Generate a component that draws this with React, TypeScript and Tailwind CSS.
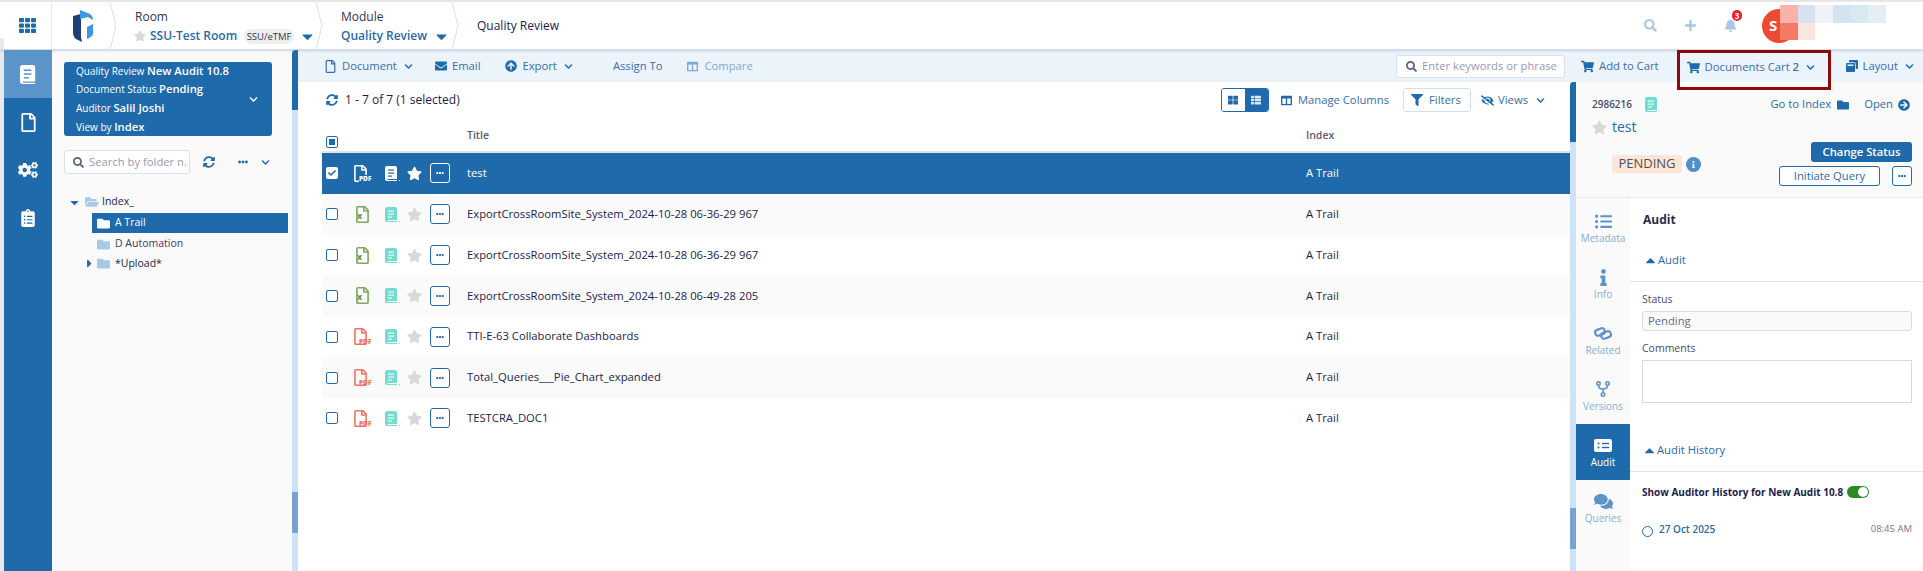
import {
  FaArrowCircleRight,
  FaArrowCircleUp,
  FaBell,
  FaCaretDown,
  FaCaretRight,
  FaCaretUp,
  FaCheck,
  FaChevronDown,
  FaClipboardList,
  FaCogs,
  FaColumns,
  FaComments,
  FaEllipsisH,
  FaEnvelope,
  FaEyeSlash,
  FaFilter,
  FaFolder,
  FaFolderOpen,
  FaInfo,
  FaListUl,
  FaPlus,
  FaRegFile,
  FaSearch,
  FaShoppingCart,
  FaStar,
  FaSyncAlt,
  FaTh,
  FaThLarge,
  FaThList,
  FaWindowRestore,
} from "react-icons/fa";

const ROWS = [
  { title: "test", type: "pdf" },
  { title: "ExportCrossRoomSite_System_2024-10-28 06-36-29 967", type: "xls" },
  { title: "ExportCrossRoomSite_System_2024-10-28 06-36-29 967", type: "xls" },
  { title: "ExportCrossRoomSite_System_2024-10-28 06-49-28 205", type: "xls" },
  { title: "TTI-E-63 Collaborate Dashboards", type: "pdf" },
  { title: "Total_Queries___Pie_Chart_expanded", type: "pdf" },
  { title: "TESTCRA_DOC1", type: "pdf" },
];

function Sep() {
  return (
    <svg width="6" height="48" viewBox="0 0 6 48" className="shrink-0">
      <polyline points="0,0 6,24 0,48" fill="none" stroke="#d5e2ef" strokeWidth="1" />
    </svg>
  );
}

function BookIcon({ size = 15, color = "#fff", line = "#1f6aab" }: { size?: number; color?: string; line?: string }) {
  return (
    <svg width={size * 0.8} height={size} viewBox="0 0 12 15">
      <path d="M2 0h8a2 2 0 0 1 2 2v11H2.5a.9.9 0 0 0 0 1H12v1H2a2 2 0 0 1-2-2V2a2 2 0 0 1 2-2z" fill={color} />
      <rect x="3" y="3.5" width="6" height="1.2" fill={line} />
      <rect x="3" y="6.5" width="6" height="1.2" fill={line} />
      <rect x="3" y="9.5" width="4" height="1.2" fill={line} />
    </svg>
  );
}

function Logo() {
  return (
    <svg width="21" height="32" viewBox="0 0 21 32">
      <path d="M0 6 L8 4 V27 L9 32 L3 29 Q0 27 0 22 Z" fill="#1d3f75" />
      <path d="M7 0 L17 4 Q20 6 20 10 L15 7 L7 9 Z" fill="#3f97e0" />
      <path d="M20 14 V24 Q19 27 14 29 V17 Z" fill="#3f97e0" />
    </svg>
  );
}

function RelatedIcon() {
  return (
    <svg width="18" height="15" viewBox="0 0 18 15" fill="none" stroke="currentColor" strokeWidth="2.2">
      <rect x="1" y="3" width="10" height="6" rx="3" transform="rotate(-20 6 6)" />
      <rect x="7" y="6" width="10" height="6" rx="3" transform="rotate(-20 12 9)" />
    </svg>
  );
}

function VersionsIcon() {
  return (
    <svg width="14" height="16" viewBox="0 0 14 16" fill="none" stroke="currentColor" strokeWidth="1.6">
      <circle cx="2.5" cy="2.5" r="1.7" />
      <circle cx="11.5" cy="2.5" r="1.7" />
      <circle cx="7" cy="13.5" r="1.7" />
      <path d="M2.5 4.5 Q2.5 8 7 8 Q11.5 8 11.5 4.5 M7 8 V11.5" />
    </svg>
  );
}

function FileIcon({ type, selected }: { type: string; selected: boolean }) {
  if (type === "xls") {
    return (
      <span className="relative ml-[2px] flex h-[17px] w-[18px]">
        <FaRegFile className="text-[17px] text-[#7fa860]" />
        <span className="absolute left-[3px] top-[5px] text-[9px] font-bold leading-[10px] text-[#5d8f3c]">x</span>
      </span>
    );
  }
  const color = selected ? "text-white" : "text-[#f2715f]";
  return (
    <span className="relative flex h-[17px] w-[18px]">
      <FaRegFile className={`text-[17px] ${color}`} />
      <span className={`absolute left-[7px] top-[10px] text-[6.5px] font-extrabold leading-[7px] ${color} ${selected ? "bg-[#1f6aab]" : ""}`}>PDF</span>
    </span>
  );
}

function DotsButton({ selected = false }: { selected?: boolean }) {
  return (
    <button
      className={`flex h-[20px] w-[20px] items-center justify-center rounded-[3px] border ${
        selected ? "border-white text-white" : "border-[#1f6aab] bg-white text-[#1f6aab]"
      }`}
    >
      <FaEllipsisH className="text-[8px]" />
    </button>
  );
}

function Row({ title, type, index }: { title: string; type: string; index: number }) {
  const selected = index === 0;
  const bg = selected ? "bg-[#1f6aab]" : index % 2 === 1 ? "bg-[#fafafa]" : "bg-white";
  return (
    <div className={`flex h-[40.85px] items-center ${bg} ${selected ? "text-white" : "text-[#1d1d4b]"}`}>
      <span
        className={`ml-[4px] flex h-[12px] w-[12px] items-center justify-center rounded-[2px] ${
          selected ? "bg-white text-[#1f6aab]" : "border border-[#1f6aab] bg-white"
        }`}
      >
        {selected && <FaCheck className="text-[8px]" />}
      </span>
      <span className="ml-[14px] w-[33px]">
        <FileIcon type={type} selected={selected} />
      </span>
      <span className="flex w-[22px] items-end">
        <BookIcon size={15} color={selected ? "#fff" : "#72dcd0"} line={selected ? "#1f6aab" : "#e8faf8"} />
        <span className={`ml-[2px] h-[1px] w-[1px] ${selected ? "bg-white" : "bg-[#72dcd0]"}`} />
      </span>
      <FaStar className={`text-[15px] ${selected ? "text-white" : "text-[#d9d9d9]"}`} />
      <span className="ml-[8px]">
        <DotsButton selected={selected} />
      </span>
      <span className="ml-[17px] w-[839px] text-[11.25px]">{title}</span>
      <span className="text-[11.25px]">A Trail</span>
    </div>
  );
}

function SideTab({ icon, label, active = false }: { icon: React.ReactNode; label: string; active?: boolean }) {
  return (
    <div
      className={`flex h-[56px] flex-col items-center pt-[12px] ${
        active ? "bg-[#1f6aab] text-white" : "text-[#5f93c8]"
      }`}
    >
      <span className="flex h-[18px] items-center text-[17px]">{icon}</span>
      <span className={`text-[10px] leading-[16px] ${active ? "text-white" : "text-[#86aed6]"}`}>{label}</span>
    </div>
  );
}

function ScrollHandle() {
  return <div className="h-[41px] w-[6px] bg-[repeating-linear-gradient(90deg,#7aa6d4_0px,#7aa6d4_1px,#6d9acb_2px)]" />;
}

function App() {
  return (
    <div className="flex h-[571px] w-[1923px] flex-col overflow-hidden whitespace-nowrap bg-white font-['Open_Sans',sans-serif] text-[12px]">
      {/* top bar */}
      <header className="z-10 flex h-[50px] shrink-0 border-t-2 border-b border-t-[#e6e6e6] border-b-[#d4dce8] bg-white shadow-[0_1px_2px_rgba(120,140,170,0.3)]">
        <div className="flex w-[4px] items-end">
          <div className="h-[11px] w-[4px] bg-[#e9e9e9]" />
        </div>
        <div className="flex w-[48px] items-center justify-center border-r border-[#e3ebf3]">
          <FaTh className="text-[17px] text-[#1f6aab]" />
        </div>
        <div className="flex w-[58px] items-center pl-[21px]">
          <Logo />
        </div>
        <Sep />
        <div className="w-[200px] pl-[19px] pt-[6px]">
          <div className="text-[12px] leading-[18px] text-[#333352]">Room</div>
          <div className="mt-[1px] flex items-center">
            <FaStar className="ml-[-1px] text-[12px] text-[#d9d9d9]" />
            <span className="ml-[4px] text-[12px] font-semibold text-[#2a6aa8]">SSU-Test Room</span>
            <span className="ml-[7px] w-[50px] rounded-full bg-[#eeeeee] text-center text-[9.5px] leading-[15px] text-[#333352]">SSU/eTMF</span>
            <FaCaretDown className="ml-[5px] text-[17px] text-[#1f6aab]" />
          </div>
        </div>
        <Sep />
        <div className="w-[130px] pl-[19px] pt-[6px]">
          <div className="text-[12px] leading-[18px] text-[#333352]">Module</div>
          <div className="mt-[1px] flex items-center">
            <span className="text-[12px] font-semibold text-[#2a6aa8]">Quality Review</span>
            <FaCaretDown className="ml-[6px] text-[17px] text-[#1f6aab]" />
          </div>
        </div>
        <Sep />
        <div className="flex items-center pl-[19px] text-[12px] font-medium text-[#1d1d4b]">Quality Review</div>
        <div className="ml-auto flex items-center pr-[127px]">
          <FaSearch className="text-[13px] text-[#a8c8e6]" />
          <FaPlus className="ml-[27px] text-[13px] text-[#a8c8e6]" />
          <span className="relative ml-[27px]">
            <FaBell className="text-[13px] text-[#a8c8e6]" />
            <span className="absolute left-[8px] top-[-9px] flex h-[11px] w-[10px] items-center justify-center rounded-full bg-[#ee1c2e] text-[8px] font-bold leading-none text-white">3</span>
          </span>
          <span className="relative ml-[25px] flex h-[34px] w-[34px] items-center rounded-full bg-[#ee4a33] pl-[7px] text-[15px] font-bold text-white">
            S
            <span className="absolute left-[18px] top-[-4px] grid w-[106px] grid-cols-6">
              <span className="h-[18px] bg-[#f9b3a9]" />
              <span className="h-[18px] bg-[#d6e2ee]" />
              <span className="h-[18px] bg-[#eff2f7]" />
              <span className="h-[18px] bg-[#d5e3ef]" />
              <span className="h-[18px] bg-[#d9e9f3]" />
              <span className="h-[18px] bg-[#e6eef5]" />
              <span className="h-[17px] bg-[#f47a68]" />
              <span className="h-[17px] bg-[#fce4e0]" />
            </span>
          </span>
        </div>
      </header>

      <div className="flex min-h-0 flex-1">
        <div className="w-[4px] bg-[#e9e9e9]" />
        {/* icon rail */}
        <nav className="w-[48px] bg-[#1f6aab] text-white">
          <div className="flex h-[48px] items-center justify-center bg-[#5a94c9]">
            <BookIcon size={19} line="#5a94c9" />
          </div>
          <div className="flex h-[48px] items-center justify-center">
            <FaRegFile className="text-[19px]" />
          </div>
          <div className="flex h-[48px] items-center justify-center">
            <FaCogs className="text-[20px]" />
          </div>
          <div className="flex h-[48px] items-center justify-center">
            <FaClipboardList className="text-[18px]" />
          </div>
        </nav>

        {/* folder panel */}
        <aside className="w-[240px] bg-[#fafafa] pt-[12px]">
          <div className="ml-[12px] flex h-[74px] w-[208px] items-center rounded-[3px] bg-[#1f6aab] pl-[12px] pr-[14px] text-white">
            <div className="flex-1 text-[10px] leading-[17.7px]">
              <div>Quality Review <span className="text-[11.25px] font-semibold">New Audit 10.8</span></div>
              <div>Document Status <span className="text-[11.25px] font-semibold">Pending</span></div>
              <div>Auditor <span className="text-[11.25px] font-semibold">Salil Joshi</span></div>
              <div>View by <span className="text-[11.25px] font-semibold">Index</span></div>
            </div>
            <FaChevronDown className="text-[9px]" />
          </div>
          <div className="mt-[14px] flex items-center pl-[12px]">
            <div className="flex h-[24px] w-[126px] items-center overflow-hidden rounded-[3px] border border-[#d6e2ef] bg-white pl-[8px]">
              <FaSearch className="shrink-0 text-[11px] text-[#5f5f80]" />
              <span className="ml-[5px] text-[11.25px] text-[#9a9aae]">Search by folder n.</span>
            </div>
            <FaSyncAlt className="ml-[13px] text-[12px] text-[#1f6aab]" />
            <FaEllipsisH className="ml-[23px] text-[10px] text-[#1f6aab]" />
            <FaChevronDown className="ml-[13px] text-[9px] text-[#1f6aab]" />
          </div>
          <div className="mt-[18px] pl-[16px] text-[10.5px] text-[#1d1d4b]">
            <div className="flex h-[20px] items-center">
              <FaCaretDown className="text-[13px] text-[#1f6aab]" />
              <FaFolderOpen className="ml-[4px] text-[14px] text-[#a9c9e8]" />
              <span className="ml-[3px]">Index_</span>
            </div>
            <div className="ml-[24px] mt-[1px] flex h-[20px] w-[196px] items-center bg-[#1f6aab] pl-[5px] text-white">
              <FaFolder className="text-[13px]" />
              <span className="ml-[5px]">A Trail</span>
            </div>
            <div className="ml-[29px] flex h-[20px] items-center pt-[2px] text-[#3c3c60]">
              <FaFolder className="text-[13px] text-[#a9c9e8]" />
              <span className="ml-[5px]">D Automation</span>
            </div>
            <div className="ml-[14px] flex h-[20px] items-center pt-[1px]">
              <FaCaretRight className="w-[15px] text-[13px] text-[#1f6aab]" />
              <FaFolder className="text-[13px] text-[#a9c9e8]" />
              <span className="ml-[5px]">*Upload*</span>
            </div>
          </div>
        </aside>

        {/* folder panel scrollbar */}
        <div className="w-[6px] bg-[#d0e3f6]">
          <div className="h-[60px] rounded-tl-[4px] bg-[#1f6aab]" />
          <div className="h-[382px]" />
          <ScrollHandle />
        </div>

        <div className="flex min-w-0 flex-1 flex-col">
          {/* toolbar */}
          <div className="flex h-[32px] shrink-0 items-center bg-[#ebf3fb] pr-[9px] text-[11.25px] text-[#3b6ea8]">
            <FaRegFile className="ml-[26px] text-[13px]" />
            <span className="ml-[5px]">Document</span>
            <FaChevronDown className="ml-[7px] text-[9px] text-[#1f6aab]" />
            <FaEnvelope className="ml-[22px] text-[12px] text-[#1f6aab]" />
            <span className="ml-[5px]">Email</span>
            <FaArrowCircleUp className="ml-[25px] text-[12px] text-[#1f6aab]" />
            <span className="ml-[5px]">Export</span>
            <FaChevronDown className="ml-[7px] text-[9px] text-[#1f6aab]" />
            <span className="ml-[40px]">Assign To</span>
            <FaColumns className="ml-[25px] text-[11px] text-[#7fa9d4]" />
            <span className="ml-[6px] text-[#7fa9d4]">Compare</span>
            <div className="ml-auto flex h-[23px] w-[169px] items-center rounded-[3px] border border-[#d6e2ef] bg-white pl-[9px]">
              <FaSearch className="text-[11px] text-[#5f5f80]" />
              <span className="ml-[5px] text-[#9a9aae]">Enter keywords or phrase</span>
            </div>
            <FaShoppingCart className="ml-[16px] text-[13px] text-[#1f6aab]" />
            <span className="ml-[5px]">Add to Cart</span>
            <div className="z-20 ml-[18px] mt-[7px] flex h-[40px] w-[154px] items-center border-[3px] border-[#8b0a0a] pb-[5px] pl-[7px]">
              <FaShoppingCart className="text-[13px] text-[#1f6aab]" />
              <span className="ml-[5px]">Documents Cart <b className="font-semibold">2</b></span>
              <FaChevronDown className="ml-[7px] text-[9px] text-[#1f6aab]" />
            </div>
            <FaWindowRestore className="ml-[15px] text-[12px] text-[#1f6aab]" />
            <span className="ml-[5px]">Layout</span>
            <FaChevronDown className="ml-[7px] text-[9px] text-[#1f6aab]" />
          </div>

          <div className="flex min-h-0 flex-1">
            {/* document list */}
            <main className="w-[1272px] bg-white">
              <div className="flex h-[36px] items-center pl-[28px] pr-[25px]">
                <FaSyncAlt className="text-[12px] text-[#1f6aab]" />
                <span className="ml-[7px] text-[12px] text-[#1d1d4b]">1 - 7 of 7 (1 selected)</span>
                <div className="ml-auto flex h-[24px] w-[48px] overflow-hidden rounded-[3px] border border-[#1f6aab]">
                  <span className="flex flex-1 items-center justify-center bg-white text-[#1f6aab]">
                    <FaThLarge className="text-[10px]" />
                  </span>
                  <span className="flex flex-1 items-center justify-center bg-[#1f6aab] text-[#d8e8f8]">
                    <FaThList className="text-[10px]" />
                  </span>
                </div>
                <FaColumns className="ml-[12px] text-[11px] text-[#1f6aab]" />
                <span className="ml-[6px] text-[11.25px] text-[#3b6ea8]">Manage Columns</span>
                <div className="ml-[14px] flex h-[24px] w-[68px] items-center rounded-[3px] border border-[#cfe0f0] pl-[7px]">
                  <FaFilter className="text-[12px] text-[#1f6aab]" />
                  <span className="ml-[6px] text-[11.25px] text-[#3b6ea8]">Filters</span>
                </div>
                <FaEyeSlash className="ml-[10px] text-[13px] text-[#1f6aab]" />
                <span className="ml-[4px] text-[11.25px] text-[#3b6ea8]">Views</span>
                <FaChevronDown className="ml-[8px] text-[9px] text-[#1f6aab]" />
              </div>
              <div className="ml-[24px]">
                <div className="flex h-[35px] items-center border-b-2 border-[#e4e4e4] text-[10.5px] font-semibold text-[#5a5a72]">
                  <span className="ml-[4px] mt-[14px] flex h-[12px] w-[12px] items-center justify-center rounded-[2px] border border-[#1f6aab]">
                    <span className="h-[6px] w-[6px] bg-[#1f6aab]" />
                  </span>
                  <span className="ml-[129px] mt-[3px] w-[839px]">Title</span>
                  <span className="mt-[3px]">Index</span>
                </div>
                {ROWS.map((row, i) => (
                  <Row key={i} title={row.title} type={row.type} index={i} />
                ))}
              </div>
            </main>

            {/* detail panel scrollbar */}
            <div className="w-[6px] bg-[#d0e3f6]">
              <div className="h-[60px] rounded-tl-[4px] bg-[#1f6aab]" />
              <div className="h-[366px]" />
              <ScrollHandle />
            </div>

            {/* detail panel */}
            <section className="flex w-[347px] flex-col bg-[#fafafa]">
              <div className="h-[116px] border-b border-[#e3ebf3] pl-[16px] pr-[11px]">
                <div className="flex h-[44px] items-center pt-[1px]">
                  <span className="w-[53px] text-[10px] font-semibold text-[#4d4d6b]">2986216</span>
                  <BookIcon size={15} color="#72dcd0" line="#e8faf8" />
                  <span className="ml-auto text-[11.25px] text-[#2a6aa8]">Go to Index</span>
                  <FaFolder className="ml-[6px] text-[12px] text-[#1f6aab]" />
                  <span className="ml-[15px] text-[11.25px] text-[#2a6aa8]">Open</span>
                  <FaArrowCircleRight className="ml-[5px] mr-[2px] text-[12px] text-[#1f6aab]" />
                </div>
                <div className="mt-[-9px] flex h-[20px] items-center">
                  <FaStar className="text-[15px] text-[#d9d9d9]" />
                  <span className="ml-[5px] text-[14px] leading-[20px] text-[#2a6aa8]">test</span>
                </div>
                <div className="flex">
                  <div className="ml-[20px] mt-[18px] flex h-[18px] items-center">
                    <span className="flex h-[18px] w-[70px] items-center justify-center rounded-[3px] bg-[#fde6d5] text-[13px] text-[#4d4d5b]">PENDING</span>
                    <span className="ml-[4px] flex h-[15px] w-[15px] items-center justify-center rounded-full bg-[#4f8fcb] text-white">
                      <FaInfo className="text-[7px]" />
                    </span>
                  </div>
                  <div className="ml-auto mt-[5px] flex flex-col items-end">
                    <button className="h-[20px] w-[101px] rounded-[3px] bg-[#1f6aab] text-[11.25px] font-semibold text-white">Change Status</button>
                    <div className="mt-[4px] flex">
                      <button className="h-[20px] w-[101px] rounded-[3px] border border-[#1f6aab] bg-white text-[11.25px] text-[#2a6aa8]">Initiate Query</button>
                      <span className="ml-[12px]">
                        <DotsButton />
                      </span>
                    </div>
                  </div>
                </div>
              </div>

              <div className="flex min-h-0 flex-1">
                <div className="w-[54px] pt-[2px]">
                  <SideTab icon={<FaListUl />} label="Metadata" />
                  <SideTab icon={<FaInfo />} label="Info" />
                  <SideTab icon={<RelatedIcon />} label="Related" />
                  <SideTab icon={<VersionsIcon />} label="Versions" />
                  <SideTab
                    active
                    icon={
                      <svg width="18" height="13" viewBox="0 0 18 13">
                        <rect width="18" height="13" rx="2" fill="#fff" />
                        <circle cx="4.5" cy="4.5" r="1" fill="#1f6aab" />
                        <circle cx="4.5" cy="8.5" r="1" fill="#1f6aab" />
                        <rect x="8" y="3.8" width="7" height="1.4" fill="#1f6aab" />
                        <rect x="8" y="7.8" width="7" height="1.4" fill="#1f6aab" />
                      </svg>
                    }
                    label="Audit"
                  />
                  <SideTab icon={<FaComments className="text-[19px]" />} label="Queries" />
                </div>
                <div className="flex-1 bg-white">
                  <div className="border-b border-[#dbe5f0] pb-[12px] pl-[13px] pt-[13px]">
                    <div className="text-[12px] font-bold leading-[18px] text-[#2c2c4a]">Audit</div>
                    <div className="mt-[22px] flex items-center text-[11.25px] leading-[18px] text-[#2a6aa8]">
                      <FaCaretUp className="text-[15px] text-[#1f6aab]" />
                      <span>Audit</span>
                    </div>
                  </div>
                  <div className="pl-[12px] pr-[11px] pt-[9px]">
                    <div className="text-[10.5px] leading-[16px] text-[#4d4d6b]">Status</div>
                    <div className="mt-[4px] flex h-[20px] items-center rounded-[3px] border border-[#dcdcdc] bg-[#fafafa] pl-[5px] text-[11.25px] text-[#6a6a85]">Pending</div>
                    <div className="mt-[9px] text-[10.5px] leading-[16px] text-[#4d4d6b]">Comments</div>
                    <div className="mt-[4px] h-[43px] border border-[#d9d9d9] bg-white" />
                  </div>
                  <div className="mt-[38px] border-b border-[#dbe5f0] pb-[12px] pl-[12px]">
                    <div className="flex items-center text-[11.25px] leading-[18px] text-[#2a6aa8]">
                      <FaCaretUp className="text-[15px] text-[#1f6aab]" />
                      <span>Audit History</span>
                    </div>
                  </div>
                  <div className="flex items-center pl-[12px] pt-[12px]">
                    <span className="w-[205px] text-[10px] font-bold leading-[16px] text-[#1d1d4b]">Show Auditor History for New Audit 10.8</span>
                    <span className="flex h-[12px] w-[22px] items-center justify-end rounded-full bg-[#2a8a24] pr-[1px]">
                      <span className="h-[10px] w-[10px] rounded-full bg-white" />
                    </span>
                  </div>
                  <div className="mt-[22px] flex items-center pl-[12px] pr-[11px]">
                    <span className="mt-[3px] h-[11px] w-[11px] rounded-full border border-[#1f6aab]" />
                    <span className="ml-[6px] text-[10px] font-semibold text-[#2a6aa8]">27 Oct 2025</span>
                    <span className="ml-auto text-[9.5px] text-[#77778c]">08:45 AM</span>
                  </div>
                </div>
              </div>
            </section>
          </div>
        </div>
      </div>
    </div>
  );
}

export default App;
